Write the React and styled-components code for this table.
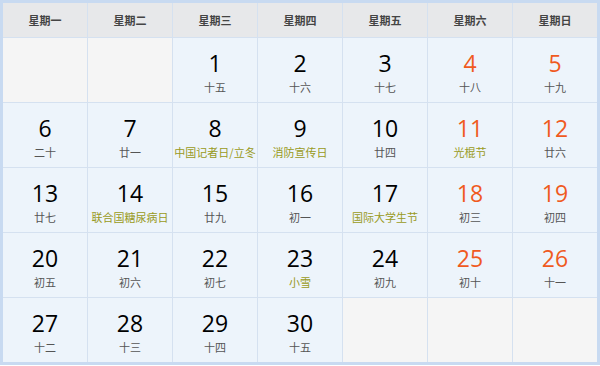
import React from "react";
import styled, { createGlobalStyle } from "styled-components";

const Global = createGlobalStyle`
  html, body { margin: 0; padding: 0; background: #ffffff; }
  body { font-family: "Noto Sans", "Noto Sans CJK SC", sans-serif; }
`;

const Calendar = styled.div`
  width: 600px;
  box-sizing: border-box;
  border: 3px solid #c8daf1;
  background: #d5e1f0;
  display: grid;
  grid-template-columns: repeat(7, 1fr);
  grid-template-rows: 34px repeat(5, 64px);
  gap: 1px;
`;

const HeadCell = styled.div`
  background: #e7e8ea;
  display: flex;
  align-items: center;
  justify-content: center;
  font-family: "Noto Sans CJK SC", sans-serif;
  font-size: 11px;
  font-weight: 700;
  color: #444;
`;

const DayCell = styled.div`
  background: ${(p) => (p.$empty ? "#f5f5f5" : "#edf4fb")};
  display: flex;
  flex-direction: column;
  align-items: center;
  justify-content: center;
  padding-top: 3px;
  box-sizing: border-box;
`;

const Num = styled.div`
  font-family: "Open Sans", "Noto Sans", sans-serif;
  font-size: 23px;
  line-height: 31px;
  color: ${(p) => (p.$weekend ? "#f05a1e" : "#000")};
`;

const Sub = styled.div`
  font-family: "Noto Sans CJK SC", sans-serif;
  font-size: 11px;
  line-height: 16px;
  color: ${(p) => (p.$fest ? "#999a22" : "#555")};
`;

const heads = ["星期一", "星期二", "星期三", "星期四", "星期五", "星期六", "星期日"];

const days = [
  [1, "十五"], [2, "十六"], [3, "十七"], [4, "十八"], [5, "十九"],
  [6, "二十"], [7, "廿一"], [8, "中国记者日/立冬", 1], [9, "消防宣传日", 1], [10, "廿四"], [11, "光棍节", 1], [12, "廿六"],
  [13, "廿七"], [14, "联合国糖尿病日", 1], [15, "廿九"], [16, "初一"], [17, "国际大学生节", 1], [18, "初三"], [19, "初四"],
  [20, "初五"], [21, "初六"], [22, "初七"], [23, "小雪", 1], [24, "初九"], [25, "初十"], [26, "十一"],
  [27, "十二"], [28, "十三"], [29, "十四"], [30, "十五"],
];

export default function App() {
  const cells = [null, null, ...days, null, null, null];
  return (
    <>
      <Global />
      <Calendar>
        {heads.map((h) => (
          <HeadCell key={h}>{h}</HeadCell>
        ))}
        {cells.map((d, i) => {
          if (!d) return <DayCell key={i} $empty />;
          const col = i % 7;
          return (
            <DayCell key={i}>
              <Num $weekend={col >= 5}>{d[0]}</Num>
              <Sub $fest={!!d[2]}>{d[1]}</Sub>
            </DayCell>
          );
        })}
      </Calendar>
    </>
  );
}
